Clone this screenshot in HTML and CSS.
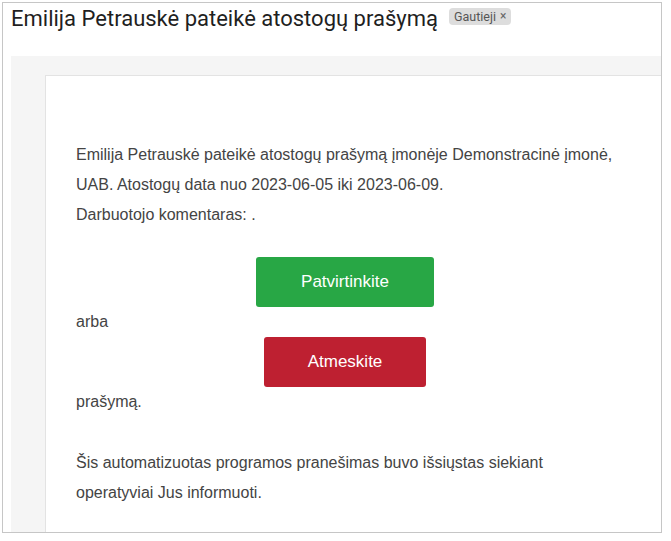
FILE: index.html
```html
<!DOCTYPE html>
<html lang="lt">
<head>
<meta charset="utf-8">
<title>Atostogų prašymas</title>
<link rel="stylesheet" href="styles.css">
</head>
<body>
<div class="frame">
  <div class="subject-row">
    <h1 class="subject">Emilija Petrauskė pateikė atostogų prašymą</h1>
    <span class="label">Gautieji <span class="label-x">×</span></span>
  </div>
  <div class="mail-bg">
    <div class="mail-panel">
      <div class="content">
        <p class="para">Emilija Petrauskė pateikė atostogų prašymą įmonėje Demonstracinė įmonė, UAB. Atostogų data nuo 2023-06-05 iki 2023-06-09.<br>Darbuotojo komentaras: .</p>
        <div class="actions">
          <a class="btn btn-approve">Patvirtinkite</a>
        </div>
        <div class="line">arba</div>
        <div class="actions actions-tight">
          <a class="btn btn-reject">Atmeskite</a>
        </div>
        <div class="line">prašymą.</div>
        <p class="para para-footer">Šis automatizuotas programos pranešimas buvo išsiųstas siekiant operatyviai Jus informuoti.</p>
      </div>
    </div>
  </div>
</div>
</body>
</html>
```
FILE: styles.css
```css
html, body {
  margin: 0;
  padding: 0;
  background: #ffffff;
}

.frame {
  margin: 2px 0 0 2px;
  width: 660px;
  height: 531px;
  box-sizing: border-box;
  border: 1px solid #c6c6c6;
  overflow: hidden;
}

.subject-row {
  display: flex;
  align-items: center;
  gap: 11px;
  padding: 2px 0 0 8px;
  height: 28px;
}

.subject {
  margin: 0;
  font-family: Roboto, "Noto Sans", sans-serif;
  font-weight: 400;
  font-size: 22px;
  line-height: 28px;
  color: #1f1f1f;
  white-space: nowrap;
}

.label {
  display: inline-flex;
  align-items: center;
  gap: 4px;
  background: #dddddd;
  color: #555555;
  font-family: Roboto, "Noto Sans", sans-serif;
  font-size: 12.5px;
  line-height: 17px;
  padding: 0 5px;
  border-radius: 4px;
  margin-top: -6px;
}

.label-x {
  font-size: 12px;
  color: #666666;
}

.mail-bg {
  margin: 23px 0 0 8px;
  background: #f5f5f5;
  padding: 19px 0 0 34px;
  height: 600px;
}

.mail-panel {
  background: #ffffff;
  border-left: 1px solid #e3e3e3;
  border-top: 1px solid #e3e3e3;
  padding: 64px 0 0 30px;
  height: 600px;
}

.content {
  width: 538px;
  font-family: "Liberation Sans", Arial, sans-serif;
  font-size: 16px;
  line-height: 30px;
  color: #444444;
}

.para {
  margin: 0;
}

.para-footer {
  margin-top: 31px;
}

.line {
  height: 30px;
}

.actions {
  display: flex;
  justify-content: center;
  padding-top: 27px;
}

.actions-tight {
  padding-top: 0;
}

.btn {
  display: block;
  height: 50px;
  line-height: 50px;
  border-radius: 3px;
  color: #ffffff;
  font-size: 17px;
  text-align: center;
  text-decoration: none;
}

.btn-approve {
  width: 178px;
  background: #28a745;
}

.btn-reject {
  width: 162px;
  background: #be2031;
}
```
